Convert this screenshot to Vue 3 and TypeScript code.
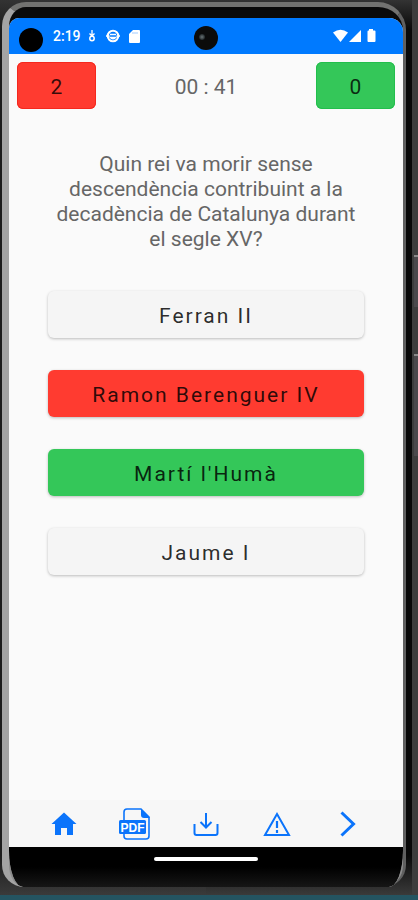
<script setup lang="ts">
import { ref } from 'vue'

type AnswerState = 'idle' | 'wrong' | 'right'

interface Answer {
  id: number
  label: string
  state: AnswerState
}

const clock = ref('2:19')
const wrongCount = ref(2)
const rightCount = ref(0)
const elapsed = ref('00 : 41')
const question = 'Quin rei va morir sense descendència contribuint a la decadència de Catalunya durant el segle XV?'

const answers = ref<Answer[]>([
  { id: 1, label: 'Ferran II', state: 'idle' },
  { id: 2, label: 'Ramon Berenguer IV', state: 'wrong' },
  { id: 3, label: "Martí l'Humà", state: 'right' },
  { id: 4, label: 'Jaume I', state: 'idle' },
])
</script>

<template>
  <div class="desk">
    <div class="phone">
      <span class="side-key key-power"></span>
      <span class="side-key key-volume"></span>
      <div class="bezel">
        <div class="screen">
          <header class="status">
            <span class="privacy-dot"></span>
            <span class="clock">{{ clock }}</span>
            <svg class="download-glyph" viewBox="0 0 8 12" aria-hidden="true">
              <path d="M4 0v5M1.500 3.500 4 6l2.500-2.500" fill="none" stroke="#fff" stroke-width="1.300" />
              <circle cx="4" cy="8.500" r="2.200" fill="none" stroke="#fff" stroke-width="1.500" />
            </svg>
            <svg class="globe-glyph" viewBox="0 0 14 14" aria-hidden="true">
              <circle cx="7" cy="7" r="5.300" fill="none" stroke="#fff" stroke-width="2" />
              <path d="M0 7h3.500M10.500 7H14M4 5.500h6M4.500 8.500q2.500 2.500 5 0z" fill="none" stroke="#fff" stroke-width="1.500" />
            </svg>
            <svg class="card-glyph" viewBox="0 0 11 13" aria-hidden="true">
              <path d="M4 0h6a1 1 0 0 1 1 1v11a1 1 0 0 1-1 1H1a1 1 0 0 1-1-1V4z" fill="#fff" />
              <path d="M4 2v2M6 2v2M8 2v2" stroke="#78b5ff" stroke-width=".7" />
            </svg>
            <span class="camera"><i class="lens"></i></span>
            <svg class="signals" viewBox="0 0 44 14" aria-hidden="true">
              <path d="M0 3.500Q7.500-2 15 3.500L7.500 13z" fill="#fff" />
              <path d="M28 1v12H16z" fill="#fff" />
              <path d="M36 0h4v1.500h1.500a1 1 0 0 1 1 1V12a1 1 0 0 1-1 1h-6a1 1 0 0 1-1-1V2.500a1 1 0 0 1 1-1H36z" fill="#fff" />
            </svg>
          </header>

          <main class="quiz">
            <div class="scoreboard">
              <output class="score wrong">{{ wrongCount }}</output>
              <time class="timer">{{ elapsed }}</time>
              <output class="score right">{{ rightCount }}</output>
            </div>

            <p class="question">{{ question }}</p>

            <div class="answers">
              <button v-for="answer in answers" :key="answer.id" type="button" class="answer" :class="answer.state">
                {{ answer.label }}
              </button>
            </div>
          </main>

          <nav class="toolbar">
            <button type="button" class="tool" aria-label="Inici">
              <svg viewBox="0 0 32 32" aria-hidden="true">
                <path d="M16 4.500 28.500 16H25v11h-6v-7h-6v7H7V16H3.500z" fill="currentColor" />
              </svg>
            </button>
            <button type="button" class="tool" aria-label="PDF">
              <svg viewBox="0 0 32 32" aria-hidden="true">
                <path d="M5 13V4a3 3 0 0 1 3-3h14l8 8v19a3 3 0 0 1-3 3H8a3 3 0 0 1-3-3v-3" fill="none" stroke="currentColor" stroke-width="1.600" />
                <path d="M22 1v6a3 3 0 0 0 3 3h6z" fill="currentColor" />
                <rect x="0" y="12" width="27" height="14" rx="1.500" fill="currentColor" />
                <text x="13.500" y="23.500" text-anchor="middle" class="pdf-text">PDF</text>
              </svg>
            </button>
            <button type="button" class="tool" aria-label="Descarrega">
              <svg viewBox="0 0 32 32" aria-hidden="true">
                <path d="M16 5v14M10.500 14l5.500 5.500 5.500-5.500M4.500 16v9a2 2 0 0 0 2 2h19a2 2 0 0 0 2-2v-9" fill="none" stroke="currentColor" stroke-width="2" />
              </svg>
            </button>
            <button type="button" class="tool" aria-label="Avís">
              <svg viewBox="0 0 32 32" aria-hidden="true">
                <path d="M16 6 28 27H4z" fill="none" stroke="currentColor" stroke-width="2" />
                <path d="M16 13v7M16 22v3" stroke="currentColor" stroke-width="2.200" />
              </svg>
            </button>
            <button type="button" class="tool" aria-label="Següent">
              <svg viewBox="0 0 32 32" aria-hidden="true">
                <path d="M9.500 4.500 21.500 16 9.500 27.500" fill="none" stroke="currentColor" stroke-width="3" />
              </svg>
            </button>
          </nav>

          <footer class="gesture"><span class="handle"></span></footer>
        </div>
      </div>
    </div>
  </div>
</template>

<style>
body {
  background: #3b3c3d;
}
</style>

<style scoped>
.desk {
  box-sizing: border-box;
  min-height: 100vh;
  display: flex;
  background: linear-gradient(#3b3c3d 0 50%, #245461 50%);
  padding-bottom: 5px;
  overflow: hidden;
  font-family: Roboto, "Noto Sans", sans-serif;
}

.phone {
  position: relative;
  box-sizing: border-box;
  flex: 1;
  display: flex;
  padding: 2px 6px 8px 2px;
  border-right: 6px solid #3d3d3d;
  background: linear-gradient(#333 0, transparent 30px calc(100% - 40px), #3a3a3a 100%),
    linear-gradient(90deg, #1d1d1d 50%, #080808 50%);
}

.side-key {
  position: absolute;
  right: -6px;
  width: 4px;
  background: #4b494c;
  border-top: 2px solid #888;
}

.key-power {
  top: 255px;
  height: 50px;
}

.key-volume {
  top: 354px;
  height: 100px;
}

.bezel {
  flex: 1;
  display: flex;
  box-sizing: border-box;
  padding-top: 11px;
  border-top: 5px solid #727270;
  border-left: 7px solid #a4a4a4;
  border-right: 3px solid #606060;
  border-radius: 24px 28px 22px 22px;
  background: linear-gradient(#0a0a0a 50%, #8c8c8c 50%);
}

.screen {
  flex: 1;
  min-width: 0;
  display: flex;
  flex-direction: column;
  border-radius: 10px 14px 14px 14px / 10px 14px 36px 36px;
  overflow: hidden;
  background: #fafafa;
}

.status {
  position: relative;
  height: 36px;
  display: flex;
  align-items: center;
  background: #007aff;
  color: #fff;
  padding: 0 26px 0 10px;
}

.privacy-dot {
  width: 24px;
  height: 24px;
  border-radius: 50%;
  background: #000;
  margin-top: 8px;
}

.clock {
  margin-left: 10px;
  width: 35px;
  font-size: 14px;
  font-weight: 500;
}

.download-glyph {
  width: 8px;
  height: 12px;
}

.globe-glyph {
  width: 14px;
  height: 14px;
  margin-left: 10px;
}

.card-glyph {
  width: 11px;
  height: 13px;
  margin-left: 9px;
}

.camera {
  position: absolute;
  left: 50%;
  top: 8px;
  width: 24px;
  height: 24px;
  border-radius: 50%;
  background: #0b0b0b;
  transform: translateX(-50%);
}

.lens {
  position: absolute;
  left: 5px;
  top: 8px;
  width: 6px;
  height: 6px;
  border-radius: 50%;
  background: radial-gradient(circle, #6a7477, #22282a 70%);
}

.signals {
  width: 44px;
  height: 14px;
  margin-left: auto;
}

.quiz {
  flex: 1;
  padding: 8px;
}

.scoreboard {
  display: flex;
  align-items: flex-start;
  justify-content: space-between;
}

.score {
  box-sizing: border-box;
  width: 79px;
  height: 47px;
  line-height: 50px;
  border-radius: 6px;
  text-align: center;
  font-size: 21px;
  color: rgba(0, 0, 0, 0.8);
}

.timer {
  font-size: 21px;
  line-height: 50px;
  color: #666;
}

.wrong {
  background: #ff3b30;
  box-shadow: inset 0 0 0 1px #f5281e;
}

.right {
  background: #34c759;
  box-shadow: inset 0 0 0 1px #22be4c;
}

.question {
  margin: 40px 36px 0;
  font-size: 21px;
  line-height: 25px;
  text-align: center;
  color: #666;
}

.answers {
  display: flex;
  flex-direction: column;
  gap: 32px;
  margin: 39px 31px 0;
}

.answer {
  height: 47px;
  padding: 3px 0 0;
  border: 0;
  border-radius: 6px;
  font-family: inherit;
  font-size: 21px;
  letter-spacing: 2px;
  color: rgba(0, 0, 0, 0.84);
  box-shadow: 0 1px 3px rgba(0, 0, 0, 0.25);
}

.answer.idle {
  background: #f5f5f5;
}

.toolbar {
  display: flex;
  justify-content: space-around;
  align-items: center;
  height: 47px;
  padding: 0 19px;
  background: #f7f7f7;
}

.tool {
  display: flex;
  padding: 0;
  border: 0;
  background: none;
  color: #0b74fb;
}

.tool svg {
  width: 32px;
  height: 32px;
}

.pdf-text {
  font-size: 12px;
  font-weight: 700;
  fill: #fff;
}

.gesture {
  display: flex;
  justify-content: center;
  height: 40px;
  background: linear-gradient(#000 50%, #161616);
}

.handle {
  width: 104px;
  height: 4px;
  margin-top: 10px;
  border-radius: 2px;
  background: #fff;
}
</style>
